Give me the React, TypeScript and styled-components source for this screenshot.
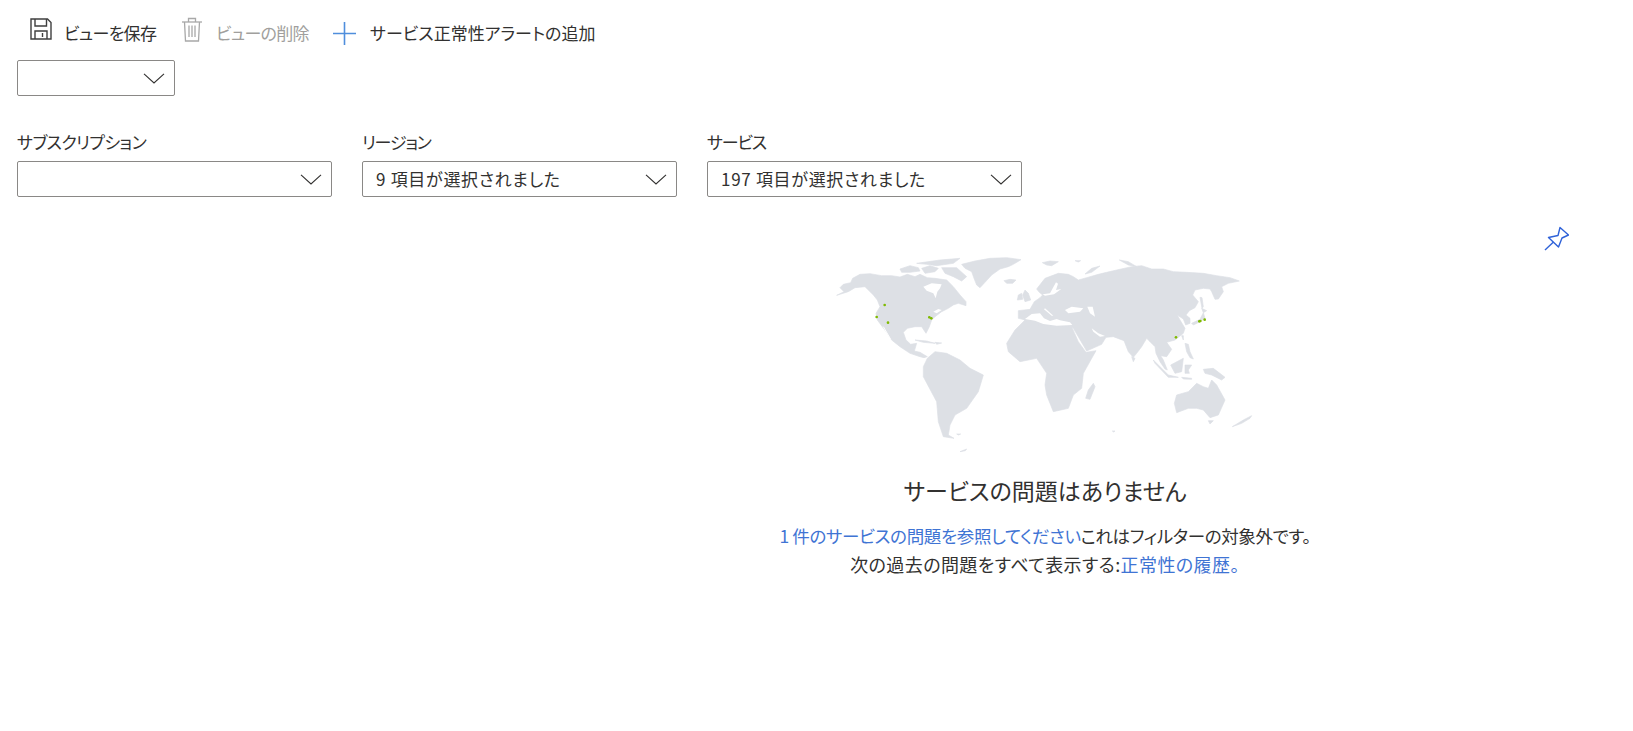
import React from "react";
import styled, { createGlobalStyle } from "styled-components";

const Global = createGlobalStyle`
  html, body { margin: 0; padding: 0; background: #fff; }
  body {
    font-family: "Noto Sans CJK JP", "Noto Sans", sans-serif;
    color: #323130;
    font-size: 17px;
    font-feature-settings: "palt";
  }
`;

const Page = styled.div`
  width: 1633px;
  height: 731px;
  overflow: hidden;
  display: flex;
  flex-direction: column;
`;
const Toolbar = styled.div`
  display: flex;
  align-items: center;
  height: 44px;
  margin-top: 11px;
  padding: 0 0 1px 30px;
`;
const ToolButton = styled.div<{ $disabled?: boolean; $width: number }>`
  display: flex;
  align-items: center;
  width: ${(p) => p.$width}px;
  color: ${(p) => (p.$disabled ? "#a19f9d" : "#323130")};
  font-size: 17px;
  white-space: nowrap;
`;
const ToolText = styled.span<{ $tracking?: number }>`
  letter-spacing: ${(p) => p.$tracking ?? 0}px;
  margin-bottom: 2px;
`;
const IconSlot = styled.span<{ $width: number; $lift?: number }>`
  display: flex;
  width: ${(p) => p.$width}px;
  margin-bottom: ${(p) => p.$lift ?? 0}px;
`;
const Select = styled.div<{ $width: number }>`
  box-sizing: border-box;
  width: ${(p) => p.$width}px;
  height: 36px;
  border: 1px solid #8a8886;
  border-radius: 2px;
  display: flex;
  align-items: center;
  justify-content: space-between;
  padding: 0 9px 0 13px;
  font-size: 17px;
`;
const Value = styled.span`
  letter-spacing: 0.7px;
  margin-bottom: 2px;
`;
const TopSelect = styled.div`
  margin: 4px 0 0 17px;
`;
const Filters = styled.div`
  display: flex;
  gap: 30px;
  margin: 32px 0 0 17px;
`;
const Field = styled.div`
  display: flex;
  flex-direction: column;
  gap: 5px;
`;
const Label = styled.div<{ $tracking: number }>`
  font-size: 17px;
  line-height: 28px;
  letter-spacing: ${(p) => p.$tracking}px;
`;
const Pane = styled.div`
  align-self: flex-end;
  width: 1176px;
  display: flex;
  flex-direction: column;
  align-items: center;
`;
const PinRow = styled.div`
  align-self: stretch;
  display: flex;
  justify-content: flex-end;
  padding: 29px 64px 0 0;
  height: 26px;
`;
const WorldMap = styled.svg`
  display: block;
  width: 450px;
  height: 215px;
  margin-top: -7px;
`;
const Heading = styled.div`
  font-size: 23px;
  line-height: 32px;
  margin-top: 14px;
`;
const Message = styled.div`
  margin-top: 15px;
  display: flex;
  flex-direction: column;
  align-items: center;
`;
const MessageLine = styled.div<{ $size: number; $tracking: number }>`
  font-size: ${(p) => p.$size}px;
  letter-spacing: ${(p) => p.$tracking}px;
  line-height: 29px;
  white-space: nowrap;
`;
const Link = styled.span`
  color: #3f74d4;
`;

const Chevron = () => (
  <svg width="22" height="11" viewBox="0 0 22 11" fill="none" stroke="#323130" strokeWidth="1.1">
    <polyline points="1,0.8 11,10 21,0.8" />
  </svg>
);

const land = [
  "M50,151L72,140L60,128L70,118L92,113L98,100L120,88L150,86L185,92L215,92L240,96L262,88L285,95L300,88L322,98L345,100L380,105L400,125L420,150L438,170L438,182L415,175L400,180L385,190L365,200L345,215L335,225L328,245L318,265L305,245L285,245L262,250L250,262L258,285L272,298L290,295L283,318L300,322L322,335L312,338L300,335L270,325L240,305L215,285L200,262L187,245L172,225L168,205L180,185L172,165L160,150L135,125L105,128L85,140Z",
  "M240,72L270,62L295,68L300,78L270,82L245,82Z",
  "M305,70L330,62L355,70L345,80L315,85Z",
  "M290,55L360,45L420,40L400,55L350,62L320,58Z",
  "M365,68L410,68L440,95L425,108L400,95L375,85Z",
  "M425,58L465,48L510,40L560,38L603,44L580,58L565,65L540,72L515,90L495,112L480,128L470,120L462,100L455,80L435,70Z",
  "M552,107L570,103L588,105L578,115L560,115Z",
  "M667,53L690,48L715,50L695,62L680,60Z",
  "M765,47L782,47L775,51Z",
  "M795,87L815,70L840,63L815,82Z",
  "M898,45L925,50L950,65L925,60Z",
  "M615,135L625,145L632,165L615,170L608,150Z",
  "M595,150L605,145L608,163L592,165Z",
  "M285,285L320,288L345,295L310,292Z",
  "M345,292L365,294L350,298Z",
  "M310,365L322,340L345,320L380,325L420,345L450,370L490,390L475,440L440,490L405,510L390,540L385,570L402,580L370,575L355,530L350,470L310,395Z",
  "M560,295L585,255L615,225L700,235L755,245L775,290L798,322L828,317L790,385L785,430L760,450L745,490L700,500L680,450L675,420L680,385L650,340L600,350L565,320Z",
  "M595,220L595,197L630,193L643,170L660,158L668,150L658,142L650,132L675,100L715,85L745,88L760,95L775,105L800,98L835,88L860,82L890,75L935,65L965,62L995,72L1030,72L1060,80L1100,82L1150,85L1190,92L1230,98L1258,108L1225,115L1205,125L1210,140L1195,162L1185,163L1175,140L1170,132L1150,130L1125,135L1118,150L1135,170L1125,188L1108,197L1098,210L1110,220L1110,235L1097,240L1090,222L1072,210L1080,225L1095,250L1090,265L1065,285L1040,292L1055,313L1040,335L1022,332L1030,345L1042,375L1035,372L1020,350L1008,325L1005,305L990,290L980,280L965,305L950,325L940,337L925,320L912,287L880,275L858,277L845,298L800,318L760,250L755,245L640,240L612,224Z",
  "M1140,157L1146,158L1150,185L1146,190Z",
  "M1115,235L1140,223L1150,203L1155,220L1140,230L1120,240Z",
  "M1145,190L1160,197L1150,203Z",
  "M1085,272L1090,272L1090,285Z",
  "M1095,295L1105,298L1110,320L1120,342L1110,338L1100,320Z",
  "M1052,360L1090,340L1085,380L1065,385Z",
  "M1000,345L1045,390L1075,397L1045,397L1005,355Z",
  "M1085,397L1115,400L1115,403L1090,402Z",
  "M1095,360L1115,360L1105,375L1108,385L1095,385Z",
  "M1150,373L1180,370L1215,397L1205,405L1175,390L1155,385Z",
  "M935,335L945,340L940,350Z",
  "M805,435L820,415L825,425L810,463L797,460Z",
  "M1063,475L1070,450L1105,440L1130,415L1150,425L1165,430L1175,405L1190,420L1215,465L1195,510L1170,518L1150,495L1130,490L1105,490L1070,503Z",
  "M1165,527L1180,527L1170,537Z",
  "M1237,545L1270,525L1295,512L1290,520L1265,535Z",
  "M410,567L422,567L416,570Z",
  "M420,620L440,612L436,617Z",
  "M877,558L885,558L881,561Z",
];

const seas = [
  "M310,125L335,115L365,118L360,130L352,140L347,160L340,145L320,137Z",
  "M340,200L355,192L365,195L350,205Z",
  "M668,148L690,145L708,112L714,116L708,135L724,132L702,148L675,152Z",
  "M615,222L635,207L660,205L672,220L690,228L710,222L720,226L750,232L757,240L710,242L670,237L645,227Z",
  "M675,190L700,212L695,212L672,193Z",
  "M735,195L755,185L790,190L780,200L745,205Z",
  "M802,185L818,185L825,215L810,205Z",
  "M815,250L835,265L855,273L840,275L820,260Z",
];

const dots: [number, number][] = [
  [194, 180], [170, 216], [204, 233], [328, 217], [334, 220],
  [1068, 277], [1138, 229], [1141, 228], [1154, 224],
];

export default function App() {
  return (
    <Page>
      <Global />
      <Toolbar>
        <ToolButton $width={152}>
          <IconSlot $width={34} $lift={8}>
            <svg width="22" height="22" viewBox="0 0 22 22" fill="none" stroke="#3f3f3f" strokeWidth="1.4">
              <path d="M1,1H17.5L21,4.5V21H1Z" />
              <path d="M5,1V8H16.5V1" />
              <path d="M5,21V13H17V21" />
              <path d="M12.5,15V19" />
            </svg>
          </IconSlot>
          <ToolText $tracking={-0.7}>ビューを保存</ToolText>
        </ToolButton>
        <ToolButton $disabled $width={151}>
          <IconSlot $width={34} $lift={8}>
            <svg width="20" height="25" viewBox="0 0 20 25" fill="none" stroke="#a8a8a8" strokeWidth="1.3">
              <path d="M0,5H20" />
              <path d="M6.5,5V1.5H13.5V5" />
              <path d="M2.5,5L3.5,24H16.5L17.5,5" />
              <path d="M7,8.5V20M10,8.5V20M13,8.5V20" />
            </svg>
          </IconSlot>
          <ToolText $tracking={-0.7}>ビューの削除</ToolText>
        </ToolButton>
        <ToolButton $width={270}>
          <IconSlot $width={37}>
            <svg width="23" height="23" viewBox="0 0 23 23" fill="none" stroke="#4f8edc" strokeWidth="1.6">
              <path d="M0,11.5H23M11.5,0V23" />
            </svg>
          </IconSlot>
          <ToolText>サービス正常性アラートの追加</ToolText>
        </ToolButton>
      </Toolbar>
      <TopSelect>
        <Select $width={158}>
          <span />
          <Chevron />
        </Select>
      </TopSelect>
      <Filters>
        <Field>
          <Label $tracking={-0.6}>サブスクリプション</Label>
          <Select $width={315}>
            <span />
            <Chevron />
          </Select>
        </Field>
        <Field>
          <Label $tracking={-1.2}>リージョン</Label>
          <Select $width={315}>
            <Value>9 項目が選択されました</Value>
            <Chevron />
          </Select>
        </Field>
        <Field>
          <Label $tracking={-1.2}>サービス</Label>
          <Select $width={315}>
            <Value>197 項目が選択されました</Value>
            <Chevron />
          </Select>
        </Field>
      </Filters>
      <Pane>
        <PinRow>
          <svg width="26" height="25" viewBox="13 11 26 25" fill="none" stroke="#2f62d8" strokeWidth="1.4" strokeLinejoin="round">
            <path d="M15,35L23.5,27" />
            <path d="M18.5,22.5L28,20.5L30,12.5L38.5,20L32,23L28.5,32Z" />
          </svg>
        </PinRow>
        <WorldMap viewBox="0 0 1350 645">
          <g fill="#dde0e5" stroke="#dde0e5" strokeWidth="2" strokeLinejoin="round">
            {land.map((d, i) => (
              <path key={i} d={d} />
            ))}
          </g>
          <g fill="#fff">
            {seas.map((d, i) => (
              <path key={i} d={d} />
            ))}
          </g>
          <path d="M190,245L212,283" stroke="#fff" strokeWidth="3" fill="none" />
          <g fill="#7fba00">
            {dots.map(([x, y], i) => (
              <circle key={i} cx={x} cy={y} r="4" />
            ))}
          </g>
        </WorldMap>
        <Heading>サービスの問題はありません</Heading>
        <Message>
          <MessageLine $size={17.5} $tracking={-0.35}>
            <Link>1 件のサービスの問題を参照してください</Link>これはフィルターの対象外です。
          </MessageLine>
          <MessageLine $size={18} $tracking={0.4}>
            次の過去の問題をすべて表示する:<Link>正常性の履歴。</Link>
          </MessageLine>
        </Message>
      </Pane>
    </Page>
  );
}
